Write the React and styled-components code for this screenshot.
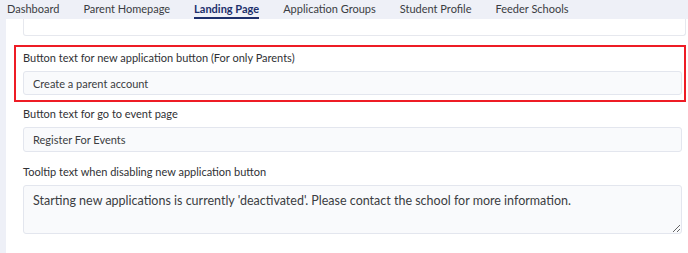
import styled, { createGlobalStyle } from "styled-components";

const GlobalStyle = createGlobalStyle`
  html, body {
    margin: 0;
    padding: 0;
    background: #eef0f7;
    font-family: Lato, "Liberation Sans", sans-serif;
  }
`

const Page = styled.div`
  width: 688px;
  height: 253px;
  overflow: hidden;
  display: flex;
  flex-direction: column;
`

const Tabs = styled.nav`
  display: flex;
  gap: 24px;
  height: 19px;
  padding-left: 7px;
  background: #eef0f7;
`

const Tab = styled.div`
  font-size: 11px;
  line-height: 17px;
  color: ${props => props.$active ? '#1c2f6b' : '#3a3c42'};
  font-weight: ${props => props.$active ? 700 : 400};
  border-bottom: 2px solid ${props => props.$active ? '#1c2f6b' : 'transparent'};
  white-space: nowrap;
`

const Panel = styled.div`
  flex: 1;
  margin-left: 6px;
  background: #fff;
  padding: 0 2px 0 8px;
  display: flex;
  flex-direction: column;
`

const ClippedBox = styled.div`
  height: 16px;
  margin: 0 0 9px 9px;
  border: 1px solid #e6e8ee;
  border-top: none;
  border-radius: 0 0 3px 3px;
`

const Field = styled.div`
  display: flex;
  flex-direction: column;
  gap: 5px;
  padding: ${props => props.$top}px 2px ${props => props.$highlight ? 5 : 0}px 7px;
  border: 2px solid ${props => props.$highlight ? '#ee1c25' : 'transparent'};
`

const Label = styled.label`
  font-size: 11px;
  line-height: 16px;
  color: #303135;
`

const Input = styled.input`
  box-sizing: border-box;
  height: ${props => props.$h || 25}px;
  width: 100%;
  padding: 0 9px;
  font-family: inherit;
  font-size: 11px;
  color: #3b3d42;
  background: #f9fafc;
  border: 1px solid #e3e6ee;
  border-radius: 3px;
  outline: none;
`

const TextArea = styled.textarea`
  box-sizing: border-box;
  height: 49px;
  width: 100%;
  padding: 6px 9px;
  font-family: inherit;
  font-size: 12.5px;
  line-height: 17px;
  color: #3b3d42;
  background: #f9fafc;
  border: 1px solid #e3e6ee;
  border-radius: 3px;
  outline: none;
  resize: vertical;
`

const tabs = ['Dashboard', 'Parent Homepage', 'Landing Page', 'Application Groups', 'Student Profile', 'Feeder Schools']

export default function App() {
  return <>
    <GlobalStyle />
    <Page>
      <Tabs>
        {tabs.map(t => <Tab key={t} $active={t === 'Landing Page'}>{t}</Tab>)}
      </Tabs>
      <Panel>
        <ClippedBox />
        <Field $highlight $top={3}>
          <Label>Button text for new application button (For only Parents)</Label>
          <Input $h={24} defaultValue="Create a parent account" />
        </Field>
        <Field $top={2}>
          <Label>Button text for go to event page</Label>
          <Input defaultValue="Register For Events" />
        </Field>
        <Field $top={8}>
          <Label>Tooltip text when disabling new application button</Label>
          <TextArea defaultValue="Starting new applications is currently 'deactivated'. Please contact the school for more information." />
        </Field>
      </Panel>
    </Page>
  </>
}
